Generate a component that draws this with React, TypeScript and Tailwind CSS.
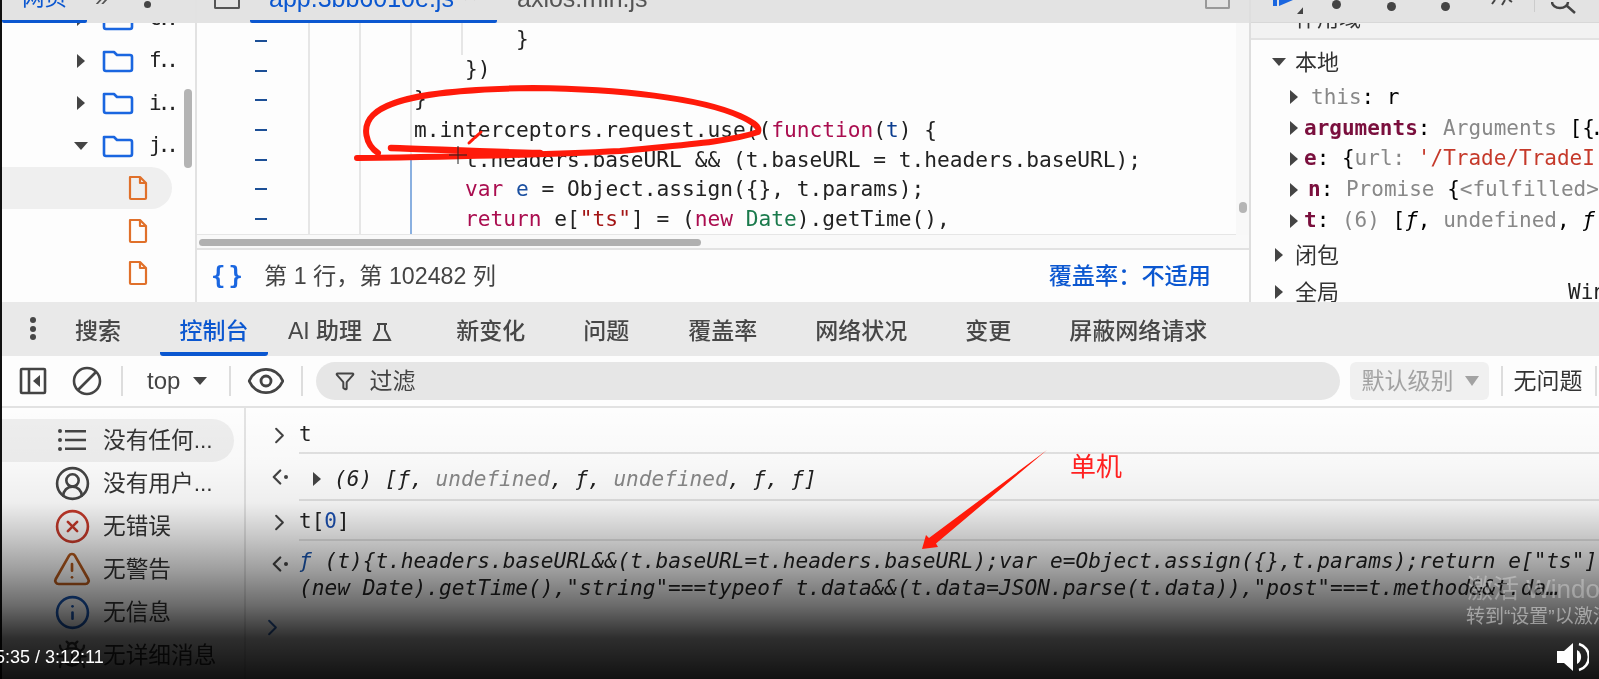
import React from 'react';
import { Bug, ChevronLeft, ChevronRight, CircleUserRound, CircleX, Eye, Funnel, Info, TriangleAlert } from 'lucide-react';

const Caret = ({ open = false, className = '' }: { open?: boolean; className?: string }) => (
  <svg width="14" height="14" viewBox="0 0 14 14" className={`shrink-0 ${className}`}>
    {open ? <path d="M0 3h14L7 11z" fill="#444" /> : <path d="M3 0v14l8-7z" fill="#444" />}
  </svg>
);

const FolderIcon = () => (
  <svg width="32" height="24" viewBox="0 0 32 24" fill="none" stroke="#1a66e0" strokeWidth="2.6" strokeLinejoin="round">
    <path d="M2 3h10l3 3h13a2 2 0 0 1 2 2v12a2 2 0 0 1-2 2H4a2 2 0 0 1-2-2z" />
  </svg>
);

const FileIcon = () => (
  <svg width="20" height="26" viewBox="0 0 20 26" fill="none" stroke="#e0702a" strokeWidth="2.2" strokeLinejoin="round">
    <path d="M2 2h10l6 6v15a1 1 0 0 1-1 1H3a1 1 0 0 1-1-1z" />
    <path d="M12 2v6h6" />
  </svg>
);

const Sep = () => <div className="w-[2px] h-[30px] bg-[#dddddd] shrink-0" />;

const treeRows = [
  { label: 'c..', caret: true },
  { label: 'f..', caret: true },
  { label: 'i..', caret: true },
  { label: 'j..', caret: true, open: true },
];

const Tree = () => (
  <div className="w-[195px] shrink-0 flex flex-col border-r-2 border-[#e2e2e2] bg-[#fdfdfd]">
    <div className="relative z-10 h-[23px] shrink-0 bg-[#e3e3e3] flex overflow-hidden">
      <div className="w-[85px] h-[23px] border-b-[3px] border-[#0b57d0] rounded-b-[2px] text-[#0b57d0] text-[22.500px] leading-[30px] pl-[20px]">
        <div className="-mt-[17px]">网页</div>
      </div>
      <div className="ml-[8px] -mt-[17px] text-[24px] leading-[30px] text-[#555]">»</div>
      <div className="ml-[36px] mt-[1px] w-[7px] h-[7px] rounded-full bg-[#444]" />
    </div>
    <div className="flex-1 relative overflow-hidden">
      <div className="-mt-[25.6px]">
        {treeRows.map(r => (
          <div key={r.label} className="h-[42.4px] flex items-center">
            <div className="w-[86px] flex justify-end shrink-0">
              <Caret open={r.open} />
            </div>
            <div className="ml-[14px]"><FolderIcon /></div>
            <span className="ml-[15px] text-[21px] font-['DejaVu_Sans_Mono',monospace] tracking-[-4px] text-[#222]">{r.label}</span>
          </div>
        ))}
        {[0, 1, 2].map(i => (
          <div key={i} className={`h-[42.4px] flex items-center pl-[126px] rounded-r-full w-[170px] ${i === 0 ? 'bg-[#efefef]' : ''}`}>
            <FileIcon />
          </div>
        ))}
      </div>
      <div className="absolute left-[182px] top-[66px] w-[8px] h-[79px] rounded-full bg-[#b4b4b4]" />
    </div>
  </div>
);

const kw = 'text-[#aa0d4f]';

const Code = () => (
  <div className="w-[1054px] shrink-0 flex flex-col border-r-2 border-[#dedede]">
    <div className="h-[23px] shrink-0 bg-[#e3e3e3] flex text-[25px] leading-[30px] overflow-hidden">
      <div className="ml-[17px] w-[26px] h-[9px] border-2 border-t-0 border-[#555] rounded-b-[2px]" />
      <div className="ml-[10px] w-[247px] h-[23px] border-b-[3px] border-[#0b57d0] rounded-b-[2px] pl-[19px] flex text-[#0b57d0]">
        <div className="-mt-[17px] whitespace-nowrap">app.3bb6010e.js</div>
        <div className="-mt-[20px] ml-[9px] text-[#555] text-[24px]">×</div>
      </div>
      <div className="ml-[20px] -mt-[17px] text-[#555] whitespace-nowrap">axios.min.js</div>
      <div className="ml-auto mr-[19px] w-[25px] h-[9px] border-2 border-t-0 border-[#999] rounded-b-[2px]" />
    </div>
    <div className="relative h-[212px] shrink-0 flex bg-[#f8f8f8] overflow-hidden">
      <div className="relative w-[1039px] pt-[3px] bg-[#fdfdfd] border-b border-[#e6e6e6] font-['DejaVu_Sans_Mono',monospace] text-[21.2px] leading-[29.7px] text-[#222]">
        <div className="absolute left-[111px] top-0 bottom-0 w-[2px] bg-[#e6e6e6]" />
        <div className="absolute left-[162px] top-0 bottom-0 w-[2px] bg-[#e6e6e6]" />
        <div className="absolute left-[213px] top-0 h-[137px] w-[2px] bg-[#e6e6e6]" />
        <div className="absolute left-[213px] top-[137px] bottom-0 w-[2px] bg-[#8ab0e0]" />
        <div className="absolute left-[264px] top-0 h-[32px] w-[2px] bg-[#e6e6e6]" />
        {[
          <>{'        }'}</>,
          <>{'    })'}</>,
          <>{'}'}</>,
          <>m.interceptors.request.use((<span className={kw}>function</span>(<span className="text-[#0b3d8f]">t</span>) {'{'}</>,
          <>{'    t.headers.baseURL && (t.baseURL = t.headers.baseURL);'}</>,
          <>{'    '}<span className={kw}>var</span> <span className="text-[#1a4fa0]">e</span> = Object.assign({'{}'}, t.params);</>,
          <>{'    '}<span className={kw}>return</span> e[<span className="text-[#a31515]">"ts"</span>] = (<span className={kw}>new</span> <span className="text-[#1a7a4c]">Date</span>).getTime(),</>,
        ].map((line, i) => (
          <div key={i} className="flex h-[29.7px] items-center">
            <div className="ml-[58px] w-[12px] h-[2px] bg-[#1c4f96] shrink-0" />
            <pre className={`ml-[147px] font-['DejaVu_Sans_Mono',monospace] leading-[29.7px] ${i < 3 ? '-mt-[3px]' : ''}`}>{line}</pre>
          </div>
        ))}
      </div>
      <div className="flex-1 relative">
        <div className="absolute left-[3px] top-[179px] w-[8px] h-[11px] rounded-full bg-[#b5b5b5]" />
      </div>
    </div>
    <div className="h-[15px] shrink-0 bg-[#f9f9f9] border-b-2 border-[#e2e2e2] pt-[4px] pl-[2px]">
      <div className="w-[502px] h-[7px] rounded-full bg-[#b0b0b0]" />
    </div>
    <div className="h-[52px] shrink-0 bg-[#fdfdfd] flex items-center pl-[14px] pr-[38px] text-[23.200px] text-[#444]">
      <span className="font-['DejaVu_Sans_Mono',monospace] font-bold text-[#1a66e0] text-[24px] tracking-[3px] w-[53px]">{'{}'}</span>
      <span>第 1 行，第 102482 列</span>
      <span className="ml-auto text-[#0b57d0] font-medium">覆盖率：不适用</span>
    </div>
  </div>
);

const m = "font-['DejaVu_Sans_Mono',monospace] text-[21px] whitespace-pre";

const ScopeRow = ({ children }: { children: React.ReactNode }) => (
  <div className={`h-[30.9px] flex items-center pl-[36px] ${m}`}>
    <Caret className="mr-[3px]" />
    <span>{children}</span>
  </div>
);

const Scope = () => (
  <div className="flex-1 min-w-0 flex flex-col bg-[#fdfdfd] overflow-hidden">
    <div className="relative z-10 h-[23px] shrink-0 bg-[#e3e3e3] border-b border-[#d8d8d8] flex overflow-hidden">
      <svg width="30" height="14" viewBox="0 0 30 14" className="ml-[22px] shrink-0">
        <path d="M0 0h4v6H0z M6 0h14L6 6z" fill="#1a66e0" />
        <path d="M24 14h7V6z" fill="#444" />
      </svg>
      <div className="ml-[29px] w-[9px] h-[9px] rounded-full bg-[#444]" />
      <div className="ml-[46px] mt-[2px] w-[9px] h-[9px] rounded-full bg-[#444]" />
      <div className="ml-[45px] mt-[2px] w-[9px] h-[9px] rounded-full bg-[#444]" />
      <svg width="24" height="6" viewBox="0 0 24 6" className="ml-[40px]">
        <path d="M2 4 5 0M12 5l3-5M19 0l3 2" stroke="#444" strokeWidth="2" fill="none" />
      </svg>
      <div className="ml-[20px] w-[1px] h-[12px] bg-[#cccccc]" />
      <svg width="32" height="14" viewBox="0 0 32 14" className="ml-[16px]">
        <path d="M1 2a8 6 0 0 0 16 0M15 5l9 8" stroke="#444" strokeWidth="2.5" fill="none" />
      </svg>
    </div>
    <div className="h-[17px] shrink-0 bg-[#f2f2f2] border-b-2 border-[#e2e2e2] overflow-hidden pl-[44px] text-[22px] leading-[30px] text-[#333]">
      <div className="-mt-[19px]">作用域</div>
    </div>
    <div className="pt-[7px]">
      <div className="h-[30px] flex items-center pl-[21px] text-[22px] text-[#333]">
        <Caret open className="mr-[9px]" />本地
      </div>
      <div className="h-[5px]" />
      <ScopeRow><span className="ml-[7px] text-[#888]">this</span>: r</ScopeRow>
      <ScopeRow><span className="font-bold text-[#7a0f3d]">arguments</span>: <span className="text-[#888]">Arguments</span> [{'{'}…</ScopeRow>
      <ScopeRow><span className="font-bold text-[#7a0f3d]">e</span>: {'{'}<span className="text-[#888]">url:</span> <span className="text-[#c5392a]">'/Trade/TradeI</span></ScopeRow>
      <ScopeRow><span className="ml-[4px] font-bold text-[#7a0f3d]">n</span>: <span className="text-[#888]">Promise</span> {'{'}<span className="text-[#888]">{'<fulfilled>'}</span></ScopeRow>
      <ScopeRow><span className="font-bold text-[#7a0f3d]">t</span>: <span className="text-[#888]">(6)</span> [<i>ƒ</i>, <span className="text-[#888]">undefined</span>, <i>ƒ</i></ScopeRow>
      <div className="h-[30px] mt-[4px] flex items-center pl-[21px] text-[22px] text-[#333]">
        <Caret className="mr-[9px]" />闭包
      </div>
      <div className="h-[30px] mt-[7px] flex items-center pl-[21px] text-[22px] text-[#333] whitespace-nowrap">
        <Caret className="mr-[9px]" />全局
        <span className={`ml-[229px] ${m} text-[#222]`}>Win</span>
      </div>
    </div>
  </div>
);

const Tabs = () => (
  <div className="h-[54px] shrink-0 bg-[#e9e9e9] flex text-[23px] font-medium text-[#474747] whitespace-nowrap">
    <div className="w-[43px] pl-[28px] pt-[15px] flex flex-col gap-[2.600px]">
      <div className="w-[6px] h-[6px] rounded-full bg-[#474747]" />
      <div className="w-[6px] h-[6px] rounded-full bg-[#474747]" />
      <div className="w-[6px] h-[6px] rounded-full bg-[#474747]" />
    </div>
    <div className="px-[30px] pt-[5px] flex items-center">搜索</div>
    <div className="ml-[9px] h-[54px] pt-[9px] px-[19.500px] flex items-center border-b-4 border-[#0b57d0] rounded-b-[3px] text-[#0b57d0]">控制台</div>
    <div className="ml-[20px] pt-[5px] flex items-center gap-[10px]">
      AI 助理
      <svg width="20" height="20" viewBox="0 0 20 20" fill="none" stroke="#474747" strokeWidth="2">
        <path d="M5 2h10M7 2v6L2 18h16L13 8V2" />
      </svg>
    </div>
    <div className="ml-[64px] pt-[5px] flex items-center">新变化</div>
    <div className="ml-[58px] pt-[5px] flex items-center">问题</div>
    <div className="ml-[59px] pt-[5px] flex items-center">覆盖率</div>
    <div className="ml-[58px] pt-[5px] flex items-center">网络状况</div>
    <div className="ml-[58px] pt-[5px] flex items-center">变更</div>
    <div className="ml-[58px] pt-[5px] flex items-center">屏蔽网络请求</div>
  </div>
);

const Toolbar = () => (
  <div className="h-[52px] shrink-0 bg-[#fdfdfd] border-b-2 border-[#e2e2e2] flex items-center text-[23px] text-[#444] whitespace-nowrap">
    <svg width="28" height="28" viewBox="0 0 28 28" fill="none" stroke="#444" strokeWidth="2.6" className="ml-[17px] shrink-0">
      <rect x="2" y="2" width="24" height="24" rx="1" />
      <path d="M10 2v24" />
      <path d="M21 8v12l-7-6z" fill="#444" stroke="none" />
    </svg>
    <svg width="30" height="30" viewBox="0 0 30 30" fill="none" stroke="#444" strokeWidth="2.6" className="ml-[25px] shrink-0">
      <circle cx="15" cy="15" r="13" />
      <path d="M6 24 24 6" />
    </svg>
    <div className="ml-[19px]"><Sep /></div>
    <span className="ml-[24px] text-[24px]">top</span>
    <Caret open className="ml-[13px]" />
    <div className="ml-[22px]"><Sep /></div>
    <Eye size={40} strokeWidth={1.7} color="#444" className="ml-[15px] shrink-0" />
    <div className="ml-[15px]"><Sep /></div>
    <div className="ml-[13px] w-[1024px] h-[38px] rounded-full bg-[#e6e6e6] flex items-center pl-[19px]">
      <Funnel size={20} strokeWidth={2.4} color="#444" />
      <span className="ml-[14px]">过滤</span>
    </div>
    <div className="ml-[10px] w-[139px] h-[38px] rounded-[6px] bg-[#f0f0f0] flex items-center pl-[11px] text-[#a2a2a2]">
      默认级别
      <svg width="14" height="10" viewBox="0 0 14 10" className="ml-[12px]"><path d="M0 0h14L7 10z" fill="#a2a2a2" /></svg>
    </div>
    <div className="ml-[12px]"><Sep /></div>
    <span className="ml-[10px] text-[#333]">无问题</span>
    <div className="ml-[13px]"><Sep /></div>
  </div>
);

const counts = [
  { label: '没有任何...', active: true, icon: (
    <svg width="30" height="24" viewBox="0 0 30 24" fill="#444" className="shrink-0"><circle cx="3" cy="3" r="2" /><circle cx="3" cy="12" r="2" /><circle cx="3" cy="21" r="2" /><path d="M8 2h21v2.4H8zM8 10.8h21v2.4H8zM8 19.6h21V22H8z" /></svg>
  ) },
  { label: '没有用户...', icon: <CircleUserRound size={37} strokeWidth={1.7} color="#444" className="shrink-0" /> },
  { label: '无错误', icon: <CircleX size={37} strokeWidth={1.7} color="#c5392a" className="shrink-0" /> },
  { label: '无警告', icon: <TriangleAlert size={40} strokeWidth={1.6} color="#b4591d" className="shrink-0" /> },
  { label: '无信息', icon: <Info size={37} strokeWidth={1.7} color="#1a56b0" className="shrink-0" /> },
  { label: '无详细消息', icon: <Bug size={32} strokeWidth={1.8} color="#444" className="shrink-0" /> },
];

const ConsoleSidebar = () => (
  <div className="w-[244px] shrink-0 border-r-2 border-[#e3e3e3] pt-[11px] pr-[10px]">
    {counts.map(c => (
      <div key={c.label} className={`h-[42.9px] flex items-center text-[22.7px] text-[#333] whitespace-nowrap rounded-r-full ${c.active ? 'bg-[#eeeeee]' : ''}`}>
        <div className="w-[34px] ml-[53px] flex justify-center shrink-0">{c.icon}</div>
        <span className="ml-[14px]">{c.label}</span>
      </div>
    ))}
  </div>
);

const ConsoleRow = ({ dir, h, pt, children, last }: { dir: 'in' | 'out'; h: string; pt: string; children: React.ReactNode; last?: boolean }) => (
  <div className={`flex ${h}`}>
    <div className={`w-[53px] shrink-0 ${pt}`}>
      {dir === 'in' ? <ChevronRight size={27} strokeWidth={1.8} color="#444" className="ml-[20px]" /> : (
        <div className="flex items-center ml-[18px]">
          <ChevronLeft size={26} strokeWidth={2.1} color="#444" />
          <div className="-ml-[6px] w-[4px] h-[4px] rounded-full bg-[#444]" />
        </div>
      )}
    </div>
    <div className={`flex-1 min-w-0 overflow-hidden ${last ? '' : 'border-b-2 border-[#e2e2e2]'} ${m}`}>{children}</div>
  </div>
);

const ConsoleOutput = () => (
  <div className="flex-1 min-w-0 bg-[#fdfdfd] text-[#222]">
    <ConsoleRow dir="in" h="h-[46px]" pt="pt-[13.5px]"><div className="pt-[11px] leading-[30px]">t</div></ConsoleRow>
    <ConsoleRow dir="out" h="h-[47px]" pt="pt-[9.7px]">
      <div className="pt-[9.7px] leading-[30px] italic flex items-center text-[21.1px]">
        <Caret className="ml-[11px] mr-[10px] not-italic" />
        <span>(6) [ƒ, <span className="text-[#888]">undefined</span>, ƒ, <span className="text-[#888]">undefined</span>, ƒ, ƒ]</span>
      </div>
    </ConsoleRow>
    <ConsoleRow dir="in" h="h-[40px]" pt="pt-[8px]"><div className="pt-[5px] leading-[30px]">t[<span className="text-[#1a4fb0]">0</span>]</div></ConsoleRow>
    <ConsoleRow dir="out" h="h-[72px]" pt="pt-[9.7px]" last>
      <div className="pt-[7px] leading-[26.5px] italic text-[21.15px]">
        <div><span className="text-[#1a56b0]">ƒ</span> (t){'{'}t.headers.baseURL&amp;&amp;(t.baseURL=t.headers.baseURL);var e=Object.assign({'{}'},t.params);return e["ts"]</div>
        <div>(new Date).getTime(),"string"===typeof t.data&amp;&amp;(t.data=JSON.parse(t.data)),"post"===t.method&amp;&amp;t.da…</div>
      </div>
    </ConsoleRow>
    <div className="pl-[13px] pt-[0.5px]"><ChevronRight size={27} strokeWidth={1.8} color="#2f5fa8" /></div>
  </div>
);

const Annotations = () => (
  <svg width="1599" height="679" viewBox="0 0 1599 679" fill="none" className="absolute inset-0 pointer-events-none">
    <path d="M378 153C366 145 361 127 373 115C392 96 450 89 533 88C620 89 700 98 740 116C755 123 760 127 758 132C730 142 680 145 620 151C580 153 500 156 357 158" stroke="#ff1a0a" strokeWidth="6" strokeLinecap="round" />
    <path d="M391 148C430 149 480 152 540 153" stroke="#ff1a0a" strokeWidth="6.5" strokeLinecap="round" />
    <path d="M469 143l12-11" stroke="#ff1a0a" strokeWidth="3" strokeLinecap="round" strokeDasharray="6 2" />
    <path d="M458 146v18M449 155h18" stroke="#222" strokeWidth="1" />
    <path d="M1047 450 936 543.500 938 547 922 549 926 535 929 538z" fill="#ff1a0a" />
  </svg>
);

export default function App() {
  return (
    <div className="relative w-[1599px] h-[679px] overflow-hidden bg-[#111] pl-[2px] flex flex-col blur-[0.4px] font-['Liberation_Sans','Noto_Sans_CJK_SC',sans-serif]">
      <div className="h-[302px] shrink-0 flex overflow-hidden">
        <Tree />
        <Code />
        <Scope />
      </div>
      <Tabs />
      <Toolbar />
      <div className="flex-1 min-h-0 flex bg-[#fdfdfd]">
        <ConsoleSidebar />
        <ConsoleOutput />
      </div>

      <div className="absolute inset-x-0 bottom-0 h-[271px] pointer-events-none bg-[linear-gradient(to_bottom,rgba(0,0,0,0)_0%,rgba(0,0,0,0.02)_20%,rgba(0,0,0,0.06)_35%,rgba(0,0,0,0.22)_48%,rgba(0,0,0,0.38)_60%,rgba(0,0,0,0.58)_73%,rgba(0,0,0,0.82)_85%,rgba(0,0,0,0.93)_100%)]" />

      <Annotations />
      <div className="absolute left-[1070px] top-[451px] text-[26px] leading-[32px] text-[#ff2020]">单机</div>

      <div className="absolute left-[1467px] top-[574px] text-[26px] leading-[30px] text-white/30 whitespace-nowrap">激活 Windows</div>
      <div className="absolute left-[1466px] top-[605px] text-[19px] leading-[24px] text-white/45 whitespace-nowrap">转到“设置”以激活 Windows。</div>
      <div className="absolute -left-[5px] top-[647px] text-[18px] leading-[20px] text-white whitespace-nowrap">5:35 / 3:12:11</div>
      <svg width="32" height="30" viewBox="0 0 32 30" className="absolute left-[1557px] top-[642px]">
        <path d="M0 9h7l9-8v28l-9-8H0z" fill="#fff" />
        <path d="M20 8a8 8 0 0 1 0 14z" fill="#fff" />
        <path d="M22 2a13.500 13.500 0 0 1 0 26" stroke="#fff" strokeWidth="2.500" fill="none" />
      </svg>
    </div>
  );
}
